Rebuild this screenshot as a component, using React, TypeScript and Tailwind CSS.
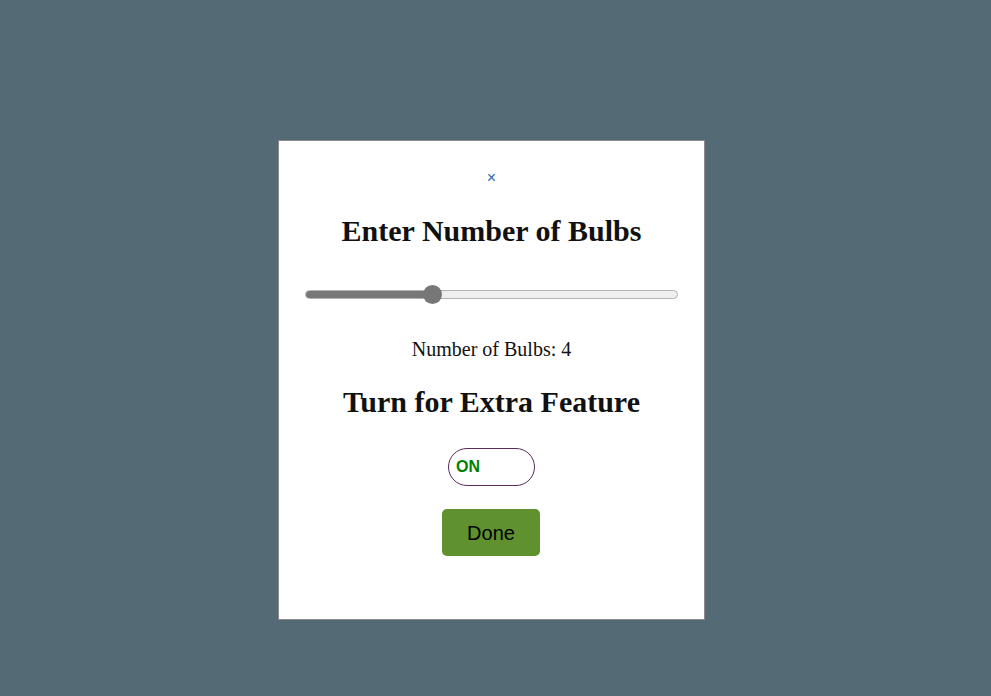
import React from "react";

export default function App() {
  const value = 4;
  const min = 1;
  const max = 10;
  const frac = (value - min) / (max - min);
  const thumb = 19;
  return (
    <div className="w-full h-[696px] bg-[#546b75] pt-[140px] pl-[278px]">
      <div className="w-[427px] h-[480px] bg-white border border-[#8a8a8a] flex flex-col items-center px-[26px]">
        <div className="mt-[27px] h-[20px] leading-[20px] text-[16px] text-[#2a6aa8] font-['Liberation_Sans',sans-serif]">
          ×
        </div>
        <h2 className="mt-[27px] h-[32px] leading-[32px] text-[30px] font-bold text-[#111] font-['Liberation_Serif',serif] whitespace-nowrap">
          Enter Number of Bulbs
        </h2>
        <div className="mt-[37px] h-[20px] w-full relative flex items-center">
          <div className="w-full h-[9px] rounded-full bg-[#efefef] border border-[#b3b3b3] overflow-hidden">
            <div
              className="h-full bg-[#777777]"
              style={{ width: `calc(${thumb / 2}px + ${frac} * (100% - ${thumb}px))` }}
            />
          </div>
          <div
            className="absolute top-[1px] w-[19px] h-[19px] rounded-full bg-[#777777]"
            style={{ left: `calc(${frac} * (100% - ${thumb}px))` }}
          />
        </div>
        <p className="mt-[33px] h-[24px] leading-[24px] text-[20px] text-[#111] font-['Liberation_Serif',serif]">
          Number of Bulbs: {value}
        </p>
        <h2 className="mt-[25px] h-[32px] leading-[32px] text-[30px] font-bold text-[#111] font-['Liberation_Serif',serif] whitespace-nowrap">
          Turn for Extra Feature
        </h2>
        <div className="mt-[30px] w-[87px] h-[38px] rounded-full border border-[#5a2a5a] flex items-center pl-[7px]">
          <span className="text-[16px] font-bold text-[#008000] font-['Liberation_Sans',sans-serif]">ON</span>
        </div>
        <button className="mt-[23px] -ml-[1px] w-[98px] h-[47px] rounded-[5px] bg-[#5f912e] text-[20px] text-black font-['Liberation_Sans',sans-serif]">
          Done
        </button>
      </div>
    </div>
  );
}
